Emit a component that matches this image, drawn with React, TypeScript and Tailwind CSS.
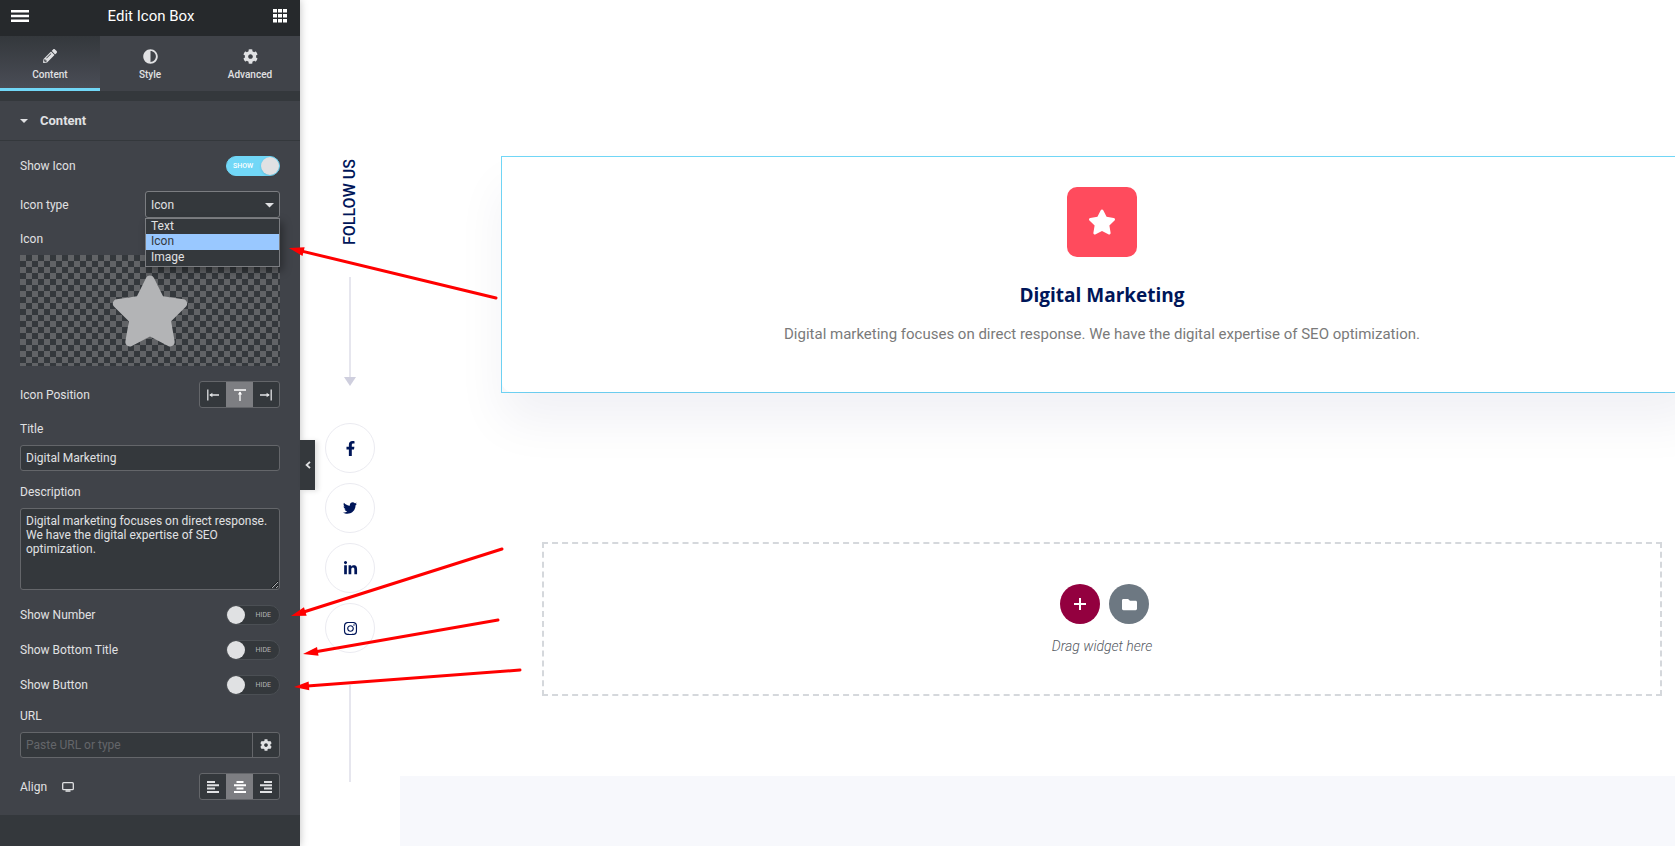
import React, { useState } from "react";
import { FaAdjust, FaCog, FaFacebookF, FaFolder, FaInstagram, FaLinkedinIn, FaPencilAlt, FaStar, FaTwitter } from "react-icons/fa";

const arrows = [
  { x1: 496, y1: 298, x2: 289, y2: 248 },
  { x1: 502, y1: 549, x2: 291, y2: 616 },
  { x1: 498, y1: 620, x2: 303, y2: 654 },
  { x1: 520, y1: 670, x2: 294, y2: 687 },
];

function Arrows() {
  return (
    <svg className="pointer-events-none absolute top-0 left-0 z-20" width="600" height="800" fill="none" aria-hidden="true">
      {arrows.map((a) => {
        const angle = (Math.atan2(a.y2 - a.y1, a.x2 - a.x1) * 180) / Math.PI;
        const length = Math.hypot(a.x2 - a.x1, a.y2 - a.y1);
        return (
          <g key={a.y1} transform={`translate(${a.x2} ${a.y2}) rotate(${angle})`}>
            <path d={`M${-length} 0H-10`} stroke="#f00" strokeWidth="3" strokeLinecap="round" />
            <path d="M0 0L-15 -4.5V4.5Z" fill="#f00" />
          </g>
        );
      })}
    </svg>
  );
}

function Toggle({ id, label, initial }: { id: string; label: string; initial: boolean }) {
  const [on, setOn] = useState(initial);
  return (
    <div className="flex h-5 items-center justify-between">
      <label htmlFor={id}>{label}</label>
      <span className="relative block h-5 w-[54px]">
        <input
          id={id}
          type="checkbox"
          checked={on}
          onChange={() => setOn(!on)}
          className="block h-5 w-[54px] cursor-pointer appearance-none rounded-full border border-[#4b4f54] bg-[#34383c] checked:border-[#71d7f7] checked:bg-[#71d7f7]"
        />
        {on ? (
          <span className="pointer-events-none absolute inset-0 flex items-center justify-between pr-px pl-[7px] text-[7px] font-medium text-white">
            SHOW
            <span className="size-[18px] rounded-full bg-[#e0e1e3] shadow" />
          </span>
        ) : (
          <span className="pointer-events-none absolute inset-0 flex items-center justify-between pr-[9px] pl-px text-[7px] text-[#b4b5b7]">
            <span className="size-[18px] rounded-full bg-[#e0e1e3]" />
            HIDE
          </span>
        )}
      </span>
    </div>
  );
}

function ButtonGroup({ options }: { options: { label: string; icon: React.ReactNode }[] }) {
  const [active, setActive] = useState(1);
  return (
    <div className="grid h-[27px] w-[81px] grid-cols-[1fr_27px_1fr] overflow-hidden rounded-[3px] border border-[#64666a] bg-[#34383c]">
      {options.map((o, i) => (
        <button
          key={o.label}
          type="button"
          aria-label={o.label}
          aria-pressed={active === i}
          onClick={() => setActive(i)}
          className={
            active === i
              ? "-my-px flex items-center justify-center bg-[#7d7e82] text-white"
              : "-my-px flex items-center justify-center text-[#e0e1e3]"
          }
        >
          {o.icon}
        </button>
      ))}
    </div>
  );
}

const Lines = ({ d }: { d: string }) => (
  <svg width="12" height="12" viewBox="0 0 12 12" fill="none" stroke="currentColor" strokeWidth="2">
    <path d={d} />
  </svg>
);

const Thin = ({ d, fill }: { d: string; fill: string }) => (
  <svg width="12" height="12" viewBox="0 0 12 12" fill="none" stroke="currentColor" strokeWidth="1.3">
    <path d={d} />
    <path d={fill} fill="currentColor" stroke="none" />
  </svg>
);

const positionOptions = [
  { label: "Left", icon: <Thin d="M.8 0.5V11.5M3 6H12" fill="M2.2 6L5.4 3.8V8.2Z" /> },
  { label: "Top", icon: <Thin d="M0 1H12M6 3V12" fill="M6 2.4L8.2 5.6H3.8Z" /> },
  { label: "Right", icon: <Thin d="M11.2 0.5V11.5M0 6H9" fill="M9.8 6L6.6 3.8V8.2Z" /> },
];

const alignOptions = [
  { label: "Align left", icon: <Lines d="M0 1H8M0 4.3H12M0 7.6H8M0 11H12" /> },
  { label: "Align center", icon: <Lines d="M2.5 1H9.5M0 4.3H12M2.5 7.6H9.5M0 11H12" /> },
  { label: "Align right", icon: <Lines d="M4 1H12M0 4.3H12M4 7.6H12M0 11H12" /> },
];

const tabs = [
  { label: "Content", icon: <FaPencilAlt size={14} /> },
  { label: "Style", icon: <FaAdjust size={15} /> },
  { label: "Advanced", icon: <FaCog size={15} /> },
];

function Sidebar() {
  const [tab, setTab] = useState("Content");
  const [type, setType] = useState("Icon");
  return (
    <aside className="relative z-10 w-[300px] shrink-0 bg-[#34383c] text-[12px] leading-[14px] text-[#e0e1e3] shadow-[0_0_8px_rgba(0,0,0,0.25)]">
      <header className="flex h-9 items-center justify-between bg-[#26292c] pr-[13px] pb-1 pl-[11px] text-white">
        <button type="button" aria-label="Menu">
          <svg width="18" height="12" viewBox="0 0 18 12" fill="currentColor">
            <path d="M0 0H18V2.4H0ZM0 4.8H18V7.2H0ZM0 9.6H18V12H0Z" />
          </svg>
        </button>
        <h1 className="text-[15px] leading-5">Edit Icon Box</h1>
        <button type="button" aria-label="Widgets">
          <svg width="14" height="14" viewBox="0 0 14 14" fill="currentColor">
            <path d="M0 0h4v3.6H0zM5 0h4v3.6H5zM10 0h4v3.6h-4zM0 5h4v3.6H0zM5 5h4v3.6H5zM10 5h4v3.6h-4zM0 10h4v3.6H0zM5 10h4v3.6H5zM10 10h4v3.6h-4z" />
          </svg>
        </button>
      </header>
      <nav className="flex h-[55px] bg-[#404349]">
        {tabs.map((t) => (
          <button
            key={t.label}
            type="button"
            onClick={() => setTab(t.label)}
            className={
              tab === t.label
                ? "flex flex-1 flex-col items-center gap-[5px] border-b-[3px] border-[#71d7f7] bg-linear-to-b from-[#34383c] to-[#4a4d56] pt-3"
                : "flex flex-1 flex-col items-center gap-[5px] border-b-[3px] border-transparent pt-3"
            }
          >
            <span className="flex h-4 items-center">{t.icon}</span>
            <span className="text-[10px] leading-3 font-medium">{t.label}</span>
          </button>
        ))}
      </nav>
      <section className="mt-[10px] bg-[#404349] pb-[15px]">
        <h2 className="border-b border-[#34383c]">
          <button type="button" className="flex h-[39px] w-full items-center gap-3 pl-5 text-[13px] font-bold">
            <svg width="8" height="4" viewBox="0 0 8 4" fill="currentColor">
              <path d="M0 0H8L4 4Z" />
            </svg>
            Content
          </button>
        </h2>
        <div className="px-5 pt-[15px]">
          <Toggle id="show-icon" label="Show Icon" initial={true} />
          <div className="mt-[15px] flex h-[27px] items-center justify-between">
            <label htmlFor="icon-type">Icon type</label>
            <div className="relative h-[27px] w-[135px]">
              <select
                id="icon-type"
                value={type}
                onChange={(e) => setType(e.target.value)}
                className="block h-[27px] w-full appearance-none rounded-[3px] border border-[#7b7d81] bg-[#34383c] px-[5px] outline-none"
              >
                <option>Text</option>
                <option>Icon</option>
                <option>Image</option>
              </select>
              <svg className="pointer-events-none absolute top-3 right-[6px]" width="9" height="5" viewBox="0 0 9 5" fill="currentColor">
                <path d="M0 0H9L4.5 4.6Z" />
              </svg>
              <ul className="absolute top-[27px] left-0 z-10 w-full border border-[#7b7d81] bg-[#34383c] pb-px shadow-[3px_4px_8px_rgba(0,0,0,0.35)]">
                {["Text", "Icon", "Image"].map((o) => (
                  <li
                    key={o}
                    onClick={() => setType(o)}
                    className={type === o ? "h-4 bg-[#99c8ff] px-[5px] text-[#34383c]" : "h-[15px] px-[5px]"}
                  >
                    {o}
                  </li>
                ))}
              </ul>
            </div>
          </div>
          <p className="mt-[14px]">Icon</p>
          <button
            type="button"
            aria-label="Choose icon"
            className="mt-[9px] flex h-[111px] w-full items-center justify-center bg-[repeating-conic-gradient(#34383c_0_25%,#616366_0_50%)] bg-[length:12px_12px] text-[#b3b4b6]"
          >
            <FaStar size={80} />
          </button>
          <div className="mt-[15px] flex items-center justify-between">
            <span>Icon Position</span>
            <ButtonGroup options={positionOptions} />
          </div>
          <label htmlFor="title" className="mt-[14px] block">Title</label>
          <input
            id="title"
            defaultValue="Digital Marketing"
            className="mt-[9px] block h-[26px] w-full rounded-[3px] border border-[#64666a] bg-[#34383c] px-[5px] outline-none"
          />
          <label htmlFor="description" className="mt-[14px] block">Description</label>
          <textarea
            id="description"
            defaultValue="Digital marketing focuses on direct response. We have the digital expertise of SEO optimization."
            className="mt-[9px] block h-[82px] w-full resize-y rounded-[3px] border border-[#64666a] bg-[#34383c] px-[5px] py-[5px] outline-none"
          />
          <div className="mt-[15px] flex flex-col gap-[15px]">
            <Toggle id="show-number" label="Show Number" initial={false} />
            <Toggle id="show-bottom" label="Show Bottom Title" initial={false} />
            <Toggle id="show-button" label="Show Button" initial={false} />
          </div>
          <label htmlFor="url" className="mt-[14px] block">URL</label>
          <div className="mt-[9px] flex h-[26px] rounded-[3px] border border-[#64666a] bg-[#34383c]">
            <input id="url" placeholder="Paste URL or type" className="min-w-0 flex-1 bg-transparent px-[5px] outline-none placeholder:text-[#64666a]" />
            <button type="button" aria-label="Link options" className="flex w-[27px] items-center justify-center border-l border-[#64666a]">
              <FaCog size={12} />
            </button>
          </div>
          <div className="mt-[15px] flex items-center">
            <span>Align</span>
            <button type="button" aria-label="Desktop" className="ml-[15px]">
              <svg width="12" height="10" viewBox="0 0 12 10" fill="none" stroke="currentColor" strokeWidth="1.3">
                <rect x=".7" y=".7" width="10.6" height="7" rx="1" />
                <path d="M3.5 9H8.5" strokeWidth="1.6" />
              </svg>
            </button>
            <div className="ml-auto">
              <ButtonGroup options={alignOptions} />
            </div>
          </div>
        </div>
      </section>
      <button
        type="button"
        aria-label="Collapse panel"
        className="absolute top-[440px] left-full flex h-[50px] w-[15px] items-center justify-center bg-[#34383c] shadow-[3px_1px_5px_rgba(0,0,0,0.12)]"
      >
        <svg width="6" height="8" viewBox="0 0 6 8" fill="none" stroke="currentColor" strokeWidth="1.8">
          <path d="M5 0.8L1.6 4L5 7.2" />
        </svg>
      </button>
    </aside>
  );
}

const socials = [
  { label: "Facebook", icon: <FaFacebookF size={15} /> },
  { label: "Twitter", icon: <FaTwitter size={14} /> },
  { label: "LinkedIn", icon: <FaLinkedinIn size={15} /> },
  { label: "Instagram", icon: <FaInstagram size={15} /> },
];

function SocialRail() {
  return (
    <aside className="flex w-[100px] shrink-0 flex-col items-center pt-[159px] text-[#001659]">
      <h2 className="h-[86px] w-4 rotate-180 text-center text-[16px] leading-4 font-medium whitespace-nowrap [writing-mode:vertical-rl]">FOLLOW US</h2>
      <div className="mt-8 h-[100px] w-[2px] bg-[#e6e6ee]" />
      <svg width="12" height="9" viewBox="0 0 12 9" fill="#cfcfde">
        <path d="M0 0H12L6 9Z" />
      </svg>
      <div className="mt-[37px] flex flex-col gap-[10px]">
        {socials.map((s) => (
          <a key={s.label} href="#" aria-label={s.label} className="flex size-[50px] items-center justify-center rounded-full border border-[#ebebf1]">
            {s.icon}
          </a>
        ))}
      </div>
      <div className="mt-8 h-[97px] w-[2px] bg-[#e6e6ee]" />
    </aside>
  );
}

export default function App() {
  return (
    <div className="relative flex min-h-screen overflow-hidden bg-white font-[Roboto,sans-serif]">
      <Sidebar />
      <SocialRail />
      <main className="flex min-w-0 flex-1 flex-col pt-[156px]">
        <div className="-mr-7 ml-[101px] border border-[#71d7f7]">
          <article className="flex flex-col items-center rounded-[10px] bg-white px-8 pt-[30px] pb-[45px] shadow-[0_30px_50px_rgba(0,22,89,0.06)]">
            <div className="flex size-[70px] items-center justify-center rounded-[10px] bg-[#ff4b5d] text-white">
              <FaStar size={28} />
            </div>
            <h3 className="mt-6 font-['Open_Sans',sans-serif] text-[19px] leading-7 font-bold text-[#001659]">Digital Marketing</h3>
            <p className="mt-3 text-[15px] leading-[26px] text-[#7a7a7a]">
              Digital marketing focuses on direct response. We have the digital expertise of SEO optimization.
            </p>
          </article>
        </div>
        <div className="mt-[149px] mr-[13px] ml-[142px] flex h-[154px] flex-col items-center border-2 border-dashed border-[#d5d8dc] pt-10">
          <div className="flex gap-[9px] pl-[5px]">
            <button type="button" aria-label="Add section" className="flex size-10 items-center justify-center rounded-full bg-[#93003f] text-white">
              <svg width="12" height="12" viewBox="0 0 12 12" stroke="currentColor" strokeWidth="2">
                <path d="M0 6H12M6 0V12" />
              </svg>
            </button>
            <button type="button" aria-label="Add template" className="flex size-10 items-center justify-center rounded-full bg-[#6d7882] text-white">
              <FaFolder size={15} />
            </button>
          </div>
          <p className="mt-3 text-[14px] leading-5 font-light text-[#54595f] italic">Drag widget here</p>
        </div>
        <div className="mt-20 min-h-[70px] flex-1 bg-[#f7f8fc]" />
      </main>
      <Arrows />
    </div>
  );
}
